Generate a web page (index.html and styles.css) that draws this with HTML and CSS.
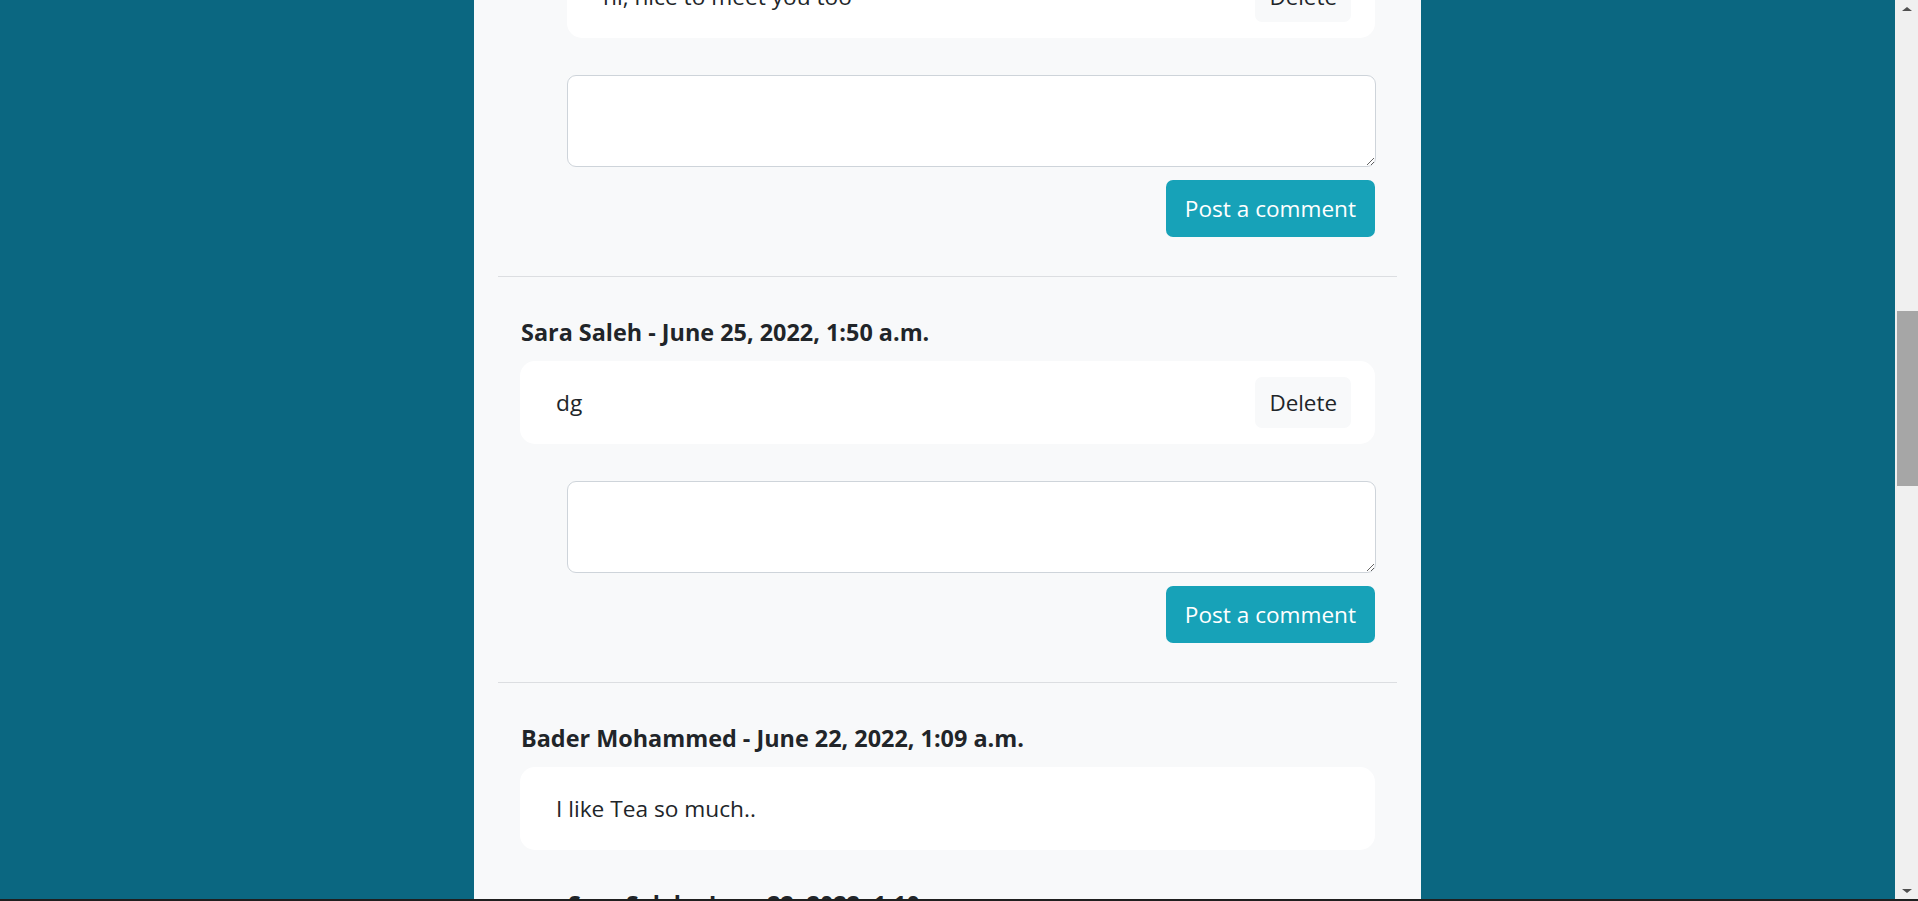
FILE: index.html
```html
<!DOCTYPE html>
<html lang="en">
<head>
<meta charset="utf-8">
<title>Comments</title>
<link rel="stylesheet" href="styles.css">
</head>
<body>
<div class="screen">
  <div class="viewport">
    <main class="page">
      <div class="scrolled">
        <section class="thread">
          <div class="comment comment-first">
            <div class="replies replies-top">
              <div class="comment">
                <h5 class="author">Sara Saleh - June 25, 2022, 1:52 a.m.</h5>
                <div class="bubble">
                  <p class="text">hi, nice to meet you too</p>
                  <button class="btn-delete" type="button">Delete</button>
                </div>
              </div>
              <form class="reply-form">
                <textarea class="field" rows="3"></textarea>
                <div class="actions"><button class="btn-post" type="button">Post a comment</button></div>
              </form>
            </div>
          </div>
        </section>

        <section class="thread">
          <hr class="sep">
          <div class="comment">
            <h5 class="author">Sara Saleh - June 25, 2022, 1:50 a.m.</h5>
            <div class="bubble">
              <p class="text">dg</p>
              <button class="btn-delete" type="button">Delete</button>
            </div>
            <div class="replies">
              <form class="reply-form">
                <textarea class="field" rows="3"></textarea>
                <div class="actions"><button class="btn-post" type="button">Post a comment</button></div>
              </form>
            </div>
          </div>
        </section>

        <section class="thread">
          <hr class="sep">
          <div class="comment">
            <h5 class="author">Bader Mohammed - June 22, 2022, 1:09 a.m.</h5>
            <div class="bubble">
              <p class="text">I like Tea so much..</p>
            </div>
            <div class="replies replies-list">
              <div class="comment">
                <h5 class="author">Sara Saleh - June 22, 2022, 1:10 a.m.</h5>
                <div class="bubble">
                  <p class="text">me too</p>
                  <button class="btn-delete" type="button">Delete</button>
                </div>
              </div>
            </div>
          </div>
        </section>
      </div>
    </main>
  </div>
  <div class="scrollbar">
    <div class="sb-arrow sb-up"></div>
    <div class="sb-track"><div class="sb-thumb"></div></div>
    <div class="sb-arrow sb-down"></div>
  </div>
</div>
<div class="taskbar-edge"></div>
</body>
</html>
```

FILE: styles.css
```css
* { box-sizing: border-box; }

html, body {
  margin: 0;
  padding: 0;
  height: 901px;
  overflow: hidden;
}

body {
  display: flex;
  flex-direction: column;
  background: #0b6781;
  font-family: "Open Sans", "Noto Sans", sans-serif;
  color: #212529;
}

.screen {
  display: flex;
  height: 899px;
  overflow: hidden;
}

.viewport {
  flex: 1;
  overflow: hidden;
}

.page {
  width: 947px;
  margin: 0 auto;
  min-height: 899px;
  background: #f8f9fa;
  padding: 0 24px;
}

.scrolled {
  margin-top: -88px;
}

.sep {
  margin: 0;
  border: 0;
  border-top: 1px solid #dcdee1;
}

.thread .sep + .comment {
  padding-top: 41px;
}

.comment {
  padding: 0 22px;
}

.replies .comment {
  padding: 0;
}

.comment-first {
  padding-top: 0;
}

.author {
  margin: 0 0 15px 1px;
  font-size: 23.4px;
  line-height: 28px;
  font-weight: 700;
  white-space: nowrap;
}

.bubble {
  display: flex;
  align-items: center;
  justify-content: space-between;
  min-height: 83px;
  background: #ffffff;
  border-radius: 15px;
  padding: 24px 24px 24px 36px;
}

.text {
  margin: 0;
  font-size: 22.7px;
  line-height: 35px;
}

.btn-delete {
  height: 51px;
  margin: -9px 0;
  padding: 0 14px;
  border: 0;
  border-radius: 7px;
  background: #f8f9fa;
  color: #212529;
  font-family: inherit;
  font-size: 22.4px;
}

.replies {
  padding: 37px 0 0 47px;
}

.replies-top {
  padding-top: 0;
}

.replies-list {
  padding-top: 40px;
}

.replies .comment + .reply-form,
.replies .comment + .comment {
  margin-top: 37px;
}

.reply-form {
  display: flex;
  flex-direction: column;
  padding-bottom: 39px;
}

.field {
  display: block;
  width: 809px;
  height: 92px;
  border: 1px solid #ced4da;
  border-radius: 9px;
  background: #ffffff;
  resize: vertical;
  font-family: inherit;
  font-size: 20px;
}

.actions {
  display: flex;
  justify-content: flex-end;
  margin-top: 13px;
}

.btn-post {
  height: 57px;
  padding: 0 19px;
  border: 0;
  border-radius: 7px;
  background: #17a2b8;
  color: #ffffff;
  font-family: inherit;
  font-size: 22.6px;
}

/* fake Windows scrollbar */
.scrollbar {
  width: 23px;
  display: flex;
  flex-direction: column;
  background: #f0f0f0;
}

.sb-arrow {
  height: 17px;
  display: flex;
  align-items: center;
  justify-content: center;
}

.sb-up::before,
.sb-down::before {
  content: "";
  width: 0;
  height: 0;
  border-left: 5px solid transparent;
  border-right: 5px solid transparent;
}

.sb-up::before { border-bottom: 4px solid #505050; }
.sb-down::before { border-top: 4px solid #505050; }

.sb-track {
  flex: 1;
  padding-left: 2px;
}

.sb-thumb {
  margin-top: 294px;
  height: 175px;
  background: #a6a6a6;
}

.taskbar-edge {
  height: 2px;
  background: #1f1f1f;
}
```
